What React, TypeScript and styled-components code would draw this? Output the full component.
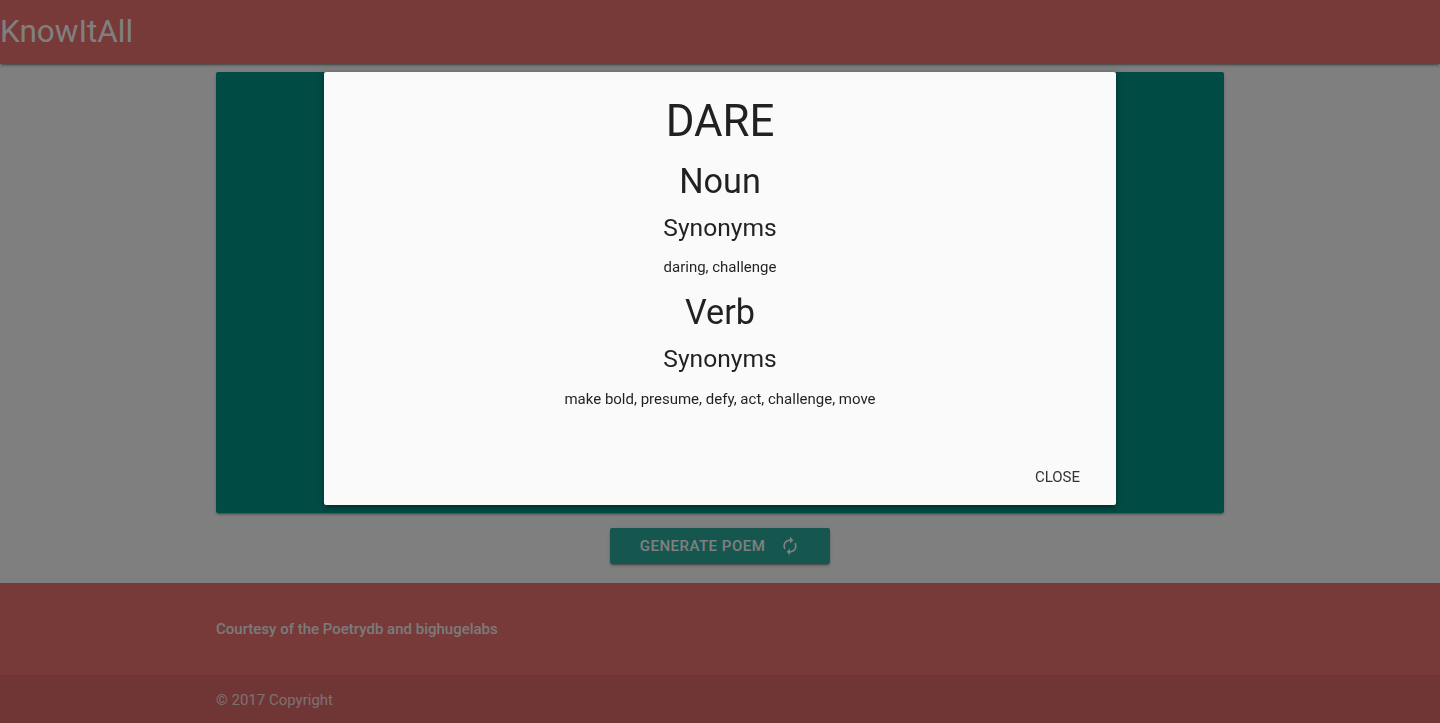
import React from 'react';
import styled, { createGlobalStyle } from 'styled-components';

const GlobalStyle = createGlobalStyle`
  html {
    font-size: 15px;
  }
  body {
    margin: 0;
    overflow: hidden;
    background: #fff;
    font-family: Roboto, "Liberation Sans", sans-serif;
    line-height: 1.5;
    color: rgba(0, 0, 0, 0.87);
  }
  * {
    box-sizing: border-box;
  }
`;

const Nav = styled.nav`
  height: 64px;
  line-height: 64px;
  background: #f07272;
  box-shadow: 0 2px 2px 0 rgba(0, 0, 0, 0.14), 0 1px 5px 0 rgba(0, 0, 0, 0.12),
    0 3px 1px -2px rgba(0, 0, 0, 0.2);
`;

const Brand = styled.a`
  color: #fff;
  font-size: 31.5px;
  text-decoration: none;
  white-space: nowrap;
`;

const Container = styled.div`
  width: 70%;
  margin: 0 auto;
`;

const Card = styled.div`
  margin: 7.5px 0 15px;
  height: 441px;
  border-radius: 2px;
  background: #009688;
  box-shadow: 0 2px 2px 0 rgba(0, 0, 0, 0.14), 0 1px 5px 0 rgba(0, 0, 0, 0.12),
    0 3px 1px -2px rgba(0, 0, 0, 0.2);
`;

const Center = styled.div`
  display: flex;
  justify-content: center;
`;

const RaisedButton = styled.button`
  display: flex;
  align-items: center;
  height: 36px;
  padding: 0 30px;
  border: none;
  border-radius: 2px;
  background: #2aae9f;
  color: #fff;
  font-family: inherit;
  font-size: 15px;
  font-weight: 500;
  letter-spacing: 0.5px;
  text-transform: uppercase;
  box-shadow: 0 2px 2px 0 rgba(0, 0, 0, 0.14), 0 1px 5px 0 rgba(0, 0, 0, 0.12),
    0 3px 1px -2px rgba(0, 0, 0, 0.2);

  svg {
    margin-left: 15px;
  }
`;

const Footer = styled.footer`
  margin-top: 19px;
  padding-top: 20px;
  background: #f07272;
`;

const FooterRow = styled.div`
  display: flow-root;
  margin-bottom: 20px;
`;

const Courtesy = styled.p`
  margin: 15px 0;
  color: #f5f5f5;
  font-size: 15px;
  font-weight: 500;
`;

const Copyright = styled.div`
  height: 50px;
  line-height: 50px;
  background: rgba(51, 51, 51, 0.08);
  color: rgba(255, 255, 255, 0.8);
  font-size: 15px;
`;

const Overlay = styled.div`
  position: fixed;
  inset: 0;
  background: #000;
  opacity: 0.5;
  z-index: 1002;
`;

const Modal = styled.div`
  position: fixed;
  top: 72px;
  left: 0;
  right: 0;
  width: 55%;
  margin: 0 auto;
  background: #fafafa;
  border-radius: 2px;
  z-index: 1003;
  box-shadow: 0 4px 6px 0 rgba(0, 0, 0, 0.14), 0 1px 10px 0 rgba(0, 0, 0, 0.12),
    0 2px 4px -1px rgba(0, 0, 0, 0.3);
`;

const ModalContent = styled.div`
  display: flex;
  flex-direction: column;
  align-items: center;
  padding: 25px 24px 39px;
  text-align: center;
`;

const Heading = styled.div<{ $size: number; $top: number }>`
  margin-top: ${(p) => p.$top}px;
  font-size: ${(p) => p.$size}px;
  line-height: 1.1;
  font-weight: 400;
`;

const Words = styled.p<{ $top: number }>`
  margin: ${(p) => p.$top}px 0 0;
  font-size: 15px;
  line-height: 22.5px;
`;

const ModalFooter = styled.div`
  display: flex;
  justify-content: flex-end;
  height: 56px;
  padding: 4px 6px;
`;

const FlatButton = styled.button`
  height: 36px;
  margin: 6px 0;
  padding: 0 30px;
  border: none;
  background: transparent;
  color: #343434;
  font-family: inherit;
  font-size: 15px;
  text-transform: uppercase;
`;

const RenewIcon = () => (
  <svg width="20" height="20" viewBox="0 0 24 24" fill="currentColor">
    <path d="M12 6v3l4-4-4-4v3c-4.42 0-8 3.58-8 8 0 1.57.46 3.030 1.24 4.26L6.7 14.8c-.45-.83-.7-1.79-.7-2.8 0-3.31 2.69-6 6-6zm6.76 1.74L17.3 9.2c.44.84.7 1.79.7 2.8 0 3.31-2.69 6-6 6v-3l-4 4 4 4v-3c4.42 0 8-3.58 8-8 0-1.57-.46-3.03-1.24-4.26z" />
  </svg>
);

const senses = [
  { pos: 'Noun', words: 'daring, challenge' },
  { pos: 'Verb', words: 'make bold, presume, defy, act, challenge, move' },
];

export default function App() {
  return (
    <>
      <GlobalStyle />
      <Nav>
        <Brand href="#">KnowItAll</Brand>
      </Nav>
      <main>
        <Container>
          <Card />
        </Container>
        <Center>
          <RaisedButton>
            Generate Poem
            <RenewIcon />
          </RaisedButton>
        </Center>
      </main>
      <Footer>
        <Container>
          <FooterRow>
            <Courtesy>Courtesy of the Poetrydb and bighugelabs</Courtesy>
          </FooterRow>
        </Container>
        <Copyright>
          <Container>© 2017 Copyright</Container>
        </Copyright>
      </Footer>

      <Overlay />
      <Modal>
        <ModalContent>
          <Heading $size={43.8} $top={0}>DARE</Heading>
          {senses.map((s, i) => (
            <React.Fragment key={s.pos}>
              <Heading $size={34.2} $top={i === 0 ? 17.6 : 15}>{s.pos}</Heading>
              <Heading $size={24.6} $top={13.5}>Synonyms</Heading>
              <Words $top={15.5}>{s.words}</Words>
            </React.Fragment>
          ))}
        </ModalContent>
        <ModalFooter>
          <FlatButton>Close</FlatButton>
        </ModalFooter>
      </Modal>
    </>
  );
}
